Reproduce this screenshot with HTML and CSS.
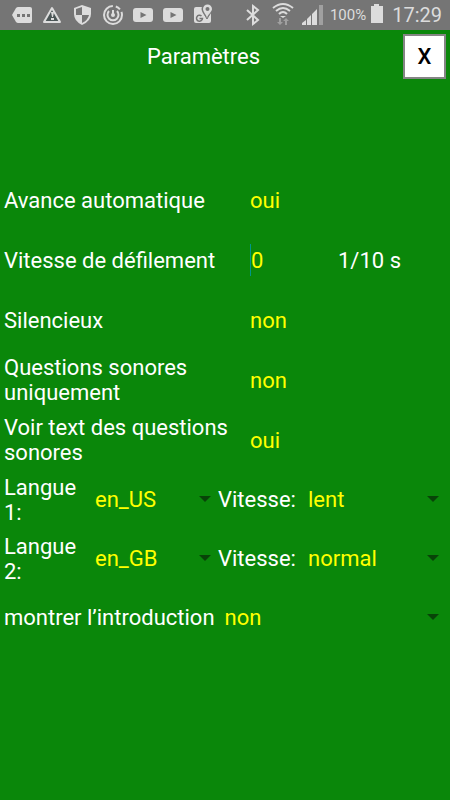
FILE: index.html
```html
<!DOCTYPE html>
<html lang="fr">

<head>
    <meta charset="UTF-8"/>
    <meta name="viewport" content="width=device-width, initial-scale=1.0"/>
    <title>Paramètres</title>
    <link rel="stylesheet" href="styles.css">
</head>

<body>
<div class="status-bar">
    <div class="status-icons">
        <!-- message -->
        <svg viewBox="0 0 30 30">
            <path class="fill" d="M10 7h12q2 0 2 2v12q0 2-2 2H10q-1 0-2-1l-4-7 4-7q1-1 2-1z"/>
            <path class="hole" d="M9 14h3v3H9zM14 14h3v3h-3zM19 14h3v3h-3z"/>
        </svg>
        <!-- alerte -->
        <svg viewBox="0 0 30 30">
            <path class="dark" d="M14 8L22 22H6z"/>
            <path class="line" d="M14 8L22 22H6z" stroke-linejoin="round"/>
            <path class="fill" d="M13 12h3l-1 5h-1zM13 18h3v2h-3z"/>
        </svg>
        <!-- bouclier -->
        <svg viewBox="0 0 30 30">
            <path class="fill" d="M14 5l9 3v6q0 7-9 11-8-4-8-11V8z"/>
            <path class="hole" d="M14 7v8H8V9zM14 15h7q-1 5-7 8z"/>
        </svg>
        <!-- minuteur -->
        <svg viewBox="0 0 30 30">
            <circle class="line" cx="15" cy="15" r="9" stroke-dasharray="42 3 5 3 3.5 0"/>
            <path class="line" d="M11 11a5.5 5.5 0 1 0 8 0"/>
            <path class="line" d="M15 10v5"/>
            <circle class="fill" cx="15" cy="15" r="2"/>
        </svg>
        <!-- vidéo -->
        <svg viewBox="0 0 30 30">
            <rect class="fill" x="5" y="8" width="20" height="14" rx="3"/>
            <path class="hole" d="M12.500 12l6 3-6 3z"/>
        </svg>
        <svg viewBox="0 0 30 30">
            <rect class="fill" x="5" y="8" width="20" height="14" rx="3"/>
            <path class="hole" d="M12.500 12l6 3-6 3z"/>
        </svg>
        <!-- carte -->
        <svg viewBox="0 0 30 30">
            <rect class="fill" x="6" y="7" width="17" height="16" rx="2"/>
            <path class="gap" d="M19 19C17 15 14 12 14 9a5 5 0 0 1 10 0c0 3-3 6-5 10z"/>
            <path class="fill" d="M19 18c-1-4-4-6-4-9a4.500 4.500 0 0 1 9 0c0 3-4 5-5 9z"/>
            <circle class="hole" cx="19.500" cy="9" r="2"/>
            <path class="thin" d="M13.500 16a3 3 0 1 0 1 2.500h-3"/>
        </svg>
    </div>
    <div class="status-icons">
        <!-- bluetooth -->
        <svg viewBox="0 0 30 30">
            <path class="line" d="M9 10l11 10-5 4V6l5 4L9 20"/>
        </svg>
        <!-- wifi -->
        <svg viewBox="0 0 30 30">
            <path class="line" d="M5 8q10-8 20 0M8 11q7-6 14 0M11 14q4-4 8 0"/>
            <path class="fill" d="M12 16h6l-3 2z"/>
            <path class="dim" d="M11 18h2v4h2l-3 3-3-3h2zM17 25h2v-4h2l-3-3-3 3h2z"/>
        </svg>
        <!-- réseau -->
        <svg viewBox="0 0 30 30">
            <path class="dim" d="M21 5h4v20h-4z"/>
            <path class="fill" d="M4 23l4-3v5H4zM9 19l4-4v10H9zM14 14l5-5v16h-5z"/>
        </svg>
        <span class="percent">100%</span>
        <svg class="battery" viewBox="0 0 14 30">
            <path class="fill" d="M4 4h5v2h4v17H1V6h3z"/>
        </svg>
        <span class="clock">17:29</span>
    </div>
</div>

<form class="settings">
    <header class="top">
        <h1>Paramètres</h1>
        <button type="button" class="close">X</button>
    </header>

    <div class="row">
        <label class="name" for="auto">Avance automatique</label>
        <button type="button" class="toggle" id="auto">oui</button>
    </div>
    <div class="row">
        <label class="name" for="scroll">Vitesse de défilement</label>
        <input type="text" class="number" id="scroll" value="0">
        <span>1/10 s</span>
    </div>
    <div class="row">
        <label class="name" for="silent">Silencieux</label>
        <button type="button" class="toggle" id="silent">non</button>
    </div>
    <div class="row">
        <label class="name" for="sound">Questions sonores uniquement</label>
        <button type="button" class="toggle" id="sound">non</button>
    </div>
    <div class="row">
        <label class="name" for="text">Voir text des questions sonores</label>
        <button type="button" class="toggle" id="text">oui</button>
    </div>

    <div class="row lang">
        <label class="lang-name" for="lang1">Langue 1:</label>
        <div class="select lang-select">
            <select id="lang1">
                <option>en_US</option>
                <option>en_GB</option>
            </select>
        </div>
        <label class="speed-name" for="speed1">Vitesse:</label>
        <div class="select">
            <select id="speed1">
                <option>lent</option>
                <option>normal</option>
            </select>
        </div>
    </div>
    <div class="row lang">
        <label class="lang-name" for="lang2">Langue 2:</label>
        <div class="select lang-select">
            <select id="lang2">
                <option>en_GB</option>
                <option>en_US</option>
            </select>
        </div>
        <label class="speed-name" for="speed2">Vitesse:</label>
        <div class="select">
            <select id="speed2">
                <option>normal</option>
                <option>lent</option>
            </select>
        </div>
    </div>
    <div class="row lang">
        <label class="intro-name" for="intro">montrer l’introduction</label>
        <div class="select">
            <select id="intro">
                <option>non</option>
                <option>oui</option>
            </select>
        </div>
    </div>
</form>
</body>
</html>
```

FILE: styles.css
```css
* {
    box-sizing: border-box;
}

body {
    margin: 0;
    background: #0a870a;
    color: #fff;
    font-family: Roboto, "Liberation Sans", sans-serif;
    font-size: 22px;
    line-height: 25px;
}

/* barre de statut */
.status-bar {
    display: flex;
    justify-content: space-between;
    height: 30px;
    padding: 0 8px;
    background: #757575;
    color: #dcdcdc;
}

.status-icons {
    display: flex;
    align-items: center;
}

.status-icons svg {
    width: 30px;
    height: 30px;
}

.status-icons .battery {
    width: 14px;
    margin: 0 8px 0 4px;
}

.percent {
    margin-left: 2px;
    font-size: 15px;
}

.clock {
    font-size: 20px;
}

.fill {
    fill: #dcdcdc;
}

.hole {
    fill: #757575;
}

.dark {
    fill: #4c5757;
}

.dim {
    fill: #a0a0a0;
}

.gap {
    fill: #757575;
    stroke: #757575;
}

.line {
    fill: none;
    stroke: #dcdcdc;
    stroke-width: 2;
}

.thin {
    fill: none;
    stroke: #757575;
    stroke-width: 1.5;
}

/* titre */
.top {
    display: flex;
    align-items: center;
    height: 53px;
    margin-bottom: 87px;
    padding-right: 4px;
}

.top h1 {
    flex: 1;
    margin: 0;
    padding-left: 4px;
    text-align: center;
    font-size: 22px;
    font-weight: 400;
}

.close {
    width: 43px;
    height: 45px;
    padding: 0;
    border: 2px solid #858585;
    background: #fff;
    color: #000;
    font-family: inherit;
    font-size: 22px;
    font-weight: 500;
}

/* lignes */
.row {
    display: flex;
    align-items: center;
    min-height: 60px;
    padding: 0 4px;
}

.name {
    width: 246px;
    padding-right: 16px;
}

.toggle,
.number,
.select select {
    padding: 0;
    border: none;
    background: none;
    color: #ff0;
    font-family: inherit;
    font-size: 22px;
    line-height: 25px;
}

.number {
    width: 88px;
    height: 32px;
    border-left: 1px solid #00968a;
    outline: none;
}

.lang {
    min-height: 59px;
}

.lang-name {
    width: 91px;
    padding-right: 8px;
}

.speed-name {
    width: 90px;
}

.intro-name {
    padding-right: 10px;
    white-space: nowrap;
}

.select {
    flex: 1;
    position: relative;
}

.lang-select {
    flex: none;
    width: 123px;
}

.select select {
    display: block;
    width: 100%;
    appearance: none;
    outline: none;
}

/* petite flèche de la liste */
.select::after {
    content: "";
    position: absolute;
    top: 9px;
    right: 7px;
    border: 6px solid transparent;
    border-top-color: #084408;
    border-bottom: none;
    pointer-events: none;
}
```
